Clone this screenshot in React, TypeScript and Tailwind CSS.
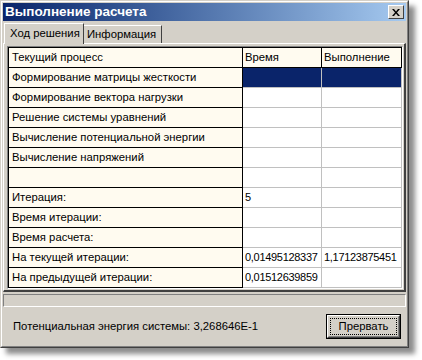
import React from "react";

type Row = { label: string; time?: string; done?: string; selected?: boolean };

const rows: Row[] = [
  { label: "Формирование матрицы жесткости", selected: true },
  { label: "Формирование вектора нагрузки" },
  { label: "Решение системы уравнений" },
  { label: "Вычисление потенциальной энергии" },
  { label: "Вычисление напряжений" },
  { label: "" },
  { label: "Итерация:", time: "5" },
  { label: "Время итерации:" },
  { label: "Время расчета:" },
  { label: "На текущей итерации:", time: "0,01495128337", done: "1,17123875451" },
  { label: "На предыдущей итерации:", time: "0,01512639859" },
];

const fixedCell =
  "h-[20px] bg-[#fffbf0] border-r border-b border-black pl-[3px] leading-[19px] whitespace-nowrap overflow-hidden";

const dataCell =
  "h-[20px] border-r border-b border-[#c0c0c0] pl-[2px] leading-[19px] whitespace-nowrap text-[11px] tracking-[-0.3px] ";

const App = () => {
  return (
    <div
      className="w-[422px] h-[360px] bg-white text-[11.3px] text-black"
      style={{ fontFamily: '"Liberation Sans", Arial, sans-serif' }}
    >
      {/* window */}
      <div className="w-[409px] h-[348px] border border-t-[#d4d0c8] border-l-[#d4d0c8] border-r-[#404040] border-b-[#404040] bg-[#d4d0c8] shadow-[6px_6px_5px_rgba(0,0,0,0.45)]">
        <div className="h-full border border-t-white border-l-white border-r-[#808080] border-b-[#808080] p-px flex flex-col">
          {/* title bar */}
          <div className="h-[18px] flex items-center justify-between bg-gradient-to-r from-[#0a246a] to-[#a6caf0] pl-[2px] pr-[2px]">
            <span className="text-white font-bold text-[13.5px] leading-none">
              Выполнение расчета
            </span>
            <div className="w-[16px] h-[14px] bg-[#d4d0c8] border border-t-white border-l-white border-r-[#404040] border-b-[#404040] flex items-center justify-center">
              <svg width="8" height="7" viewBox="0 0 8 7">
                <path d="M0 0h2l2 2.5L6 0h2L5 3.5 8 7H6L4 4.5 2 7H0l3-3.5z" fill="#000" />
              </svg>
            </div>
          </div>

          {/* tabs */}
          <div className="flex items-end h-[21px] mt-px pl-px relative z-10">
            <div className="h-[21px] w-[80px] border-t border-l border-white border-r border-r-[#404040] bg-[#d4d0c8] pl-[5px] leading-[18px] -mb-px">
              Ход решения
            </div>
            <div className="h-[18px] w-[78px] border-t border-white border-r border-r-[#404040] bg-[#d4d0c8] pl-[3px] leading-[17px]">
              Информация
            </div>
          </div>

          {/* tab page */}
          <div className="h-[249px] border-t border-l border-white border-r-2 border-b-2 border-r-[#404040] border-b-[#404040] pt-[2px] pl-[3px] pr-px pb-px">
            <div className="w-[396px] h-[243px] border border-t-[#808080] border-l-[#808080] border-r-white border-b-white">
              <div className="h-full border-t border-l border-black grid grid-cols-[234px_79px_80px] content-start">
                <div className={fixedCell}>Текущий процесс</div>
                <div className="h-[20px] bg-[#fffbf0] border-r border-b border-black pl-[2px] leading-[19px]">
                  Время
                </div>
                <div className="h-[20px] bg-[#fffbf0] border-r border-b border-black pl-[2px] leading-[19px]">
                  Выполнение
                </div>
                {rows.map((r, i) => (
                  <React.Fragment key={i}>
                    <div className={fixedCell}>{r.label}</div>
                    <div className={dataCell + (r.selected ? "bg-[#0a246a]" : "bg-white")}>
                      {r.time}
                    </div>
                    <div className={dataCell + (r.selected ? "bg-[#0a246a]" : "bg-white")}>
                      {r.done}
                    </div>
                  </React.Fragment>
                ))}
              </div>
            </div>
          </div>

          {/* progress bar */}
          <div className="mt-[2px] h-[13px] border border-t-[#808080] border-l-[#808080] border-r-white border-b-white"></div>

          {/* bottom */}
          <div className="flex-1 flex items-center justify-between pl-[10px] pr-[5px]">
            <span>Потенциальная энергия системы: 3,268646E-1</span>
            <div className="w-[75px] h-[25px] border border-black">
              <div className="h-full border border-t-white border-l-white border-r-[#404040] border-b-[#404040]">
                <div className="h-full border border-t-[#d4d0c8] border-l-[#d4d0c8] border-r-[#808080] border-b-[#808080] p-px">
                  <div className="h-full border border-dotted border-black flex items-center justify-center">
                    Прервать
                  </div>
                </div>
              </div>
            </div>
          </div>
        </div>
      </div>
    </div>
  );
};

export default App;
